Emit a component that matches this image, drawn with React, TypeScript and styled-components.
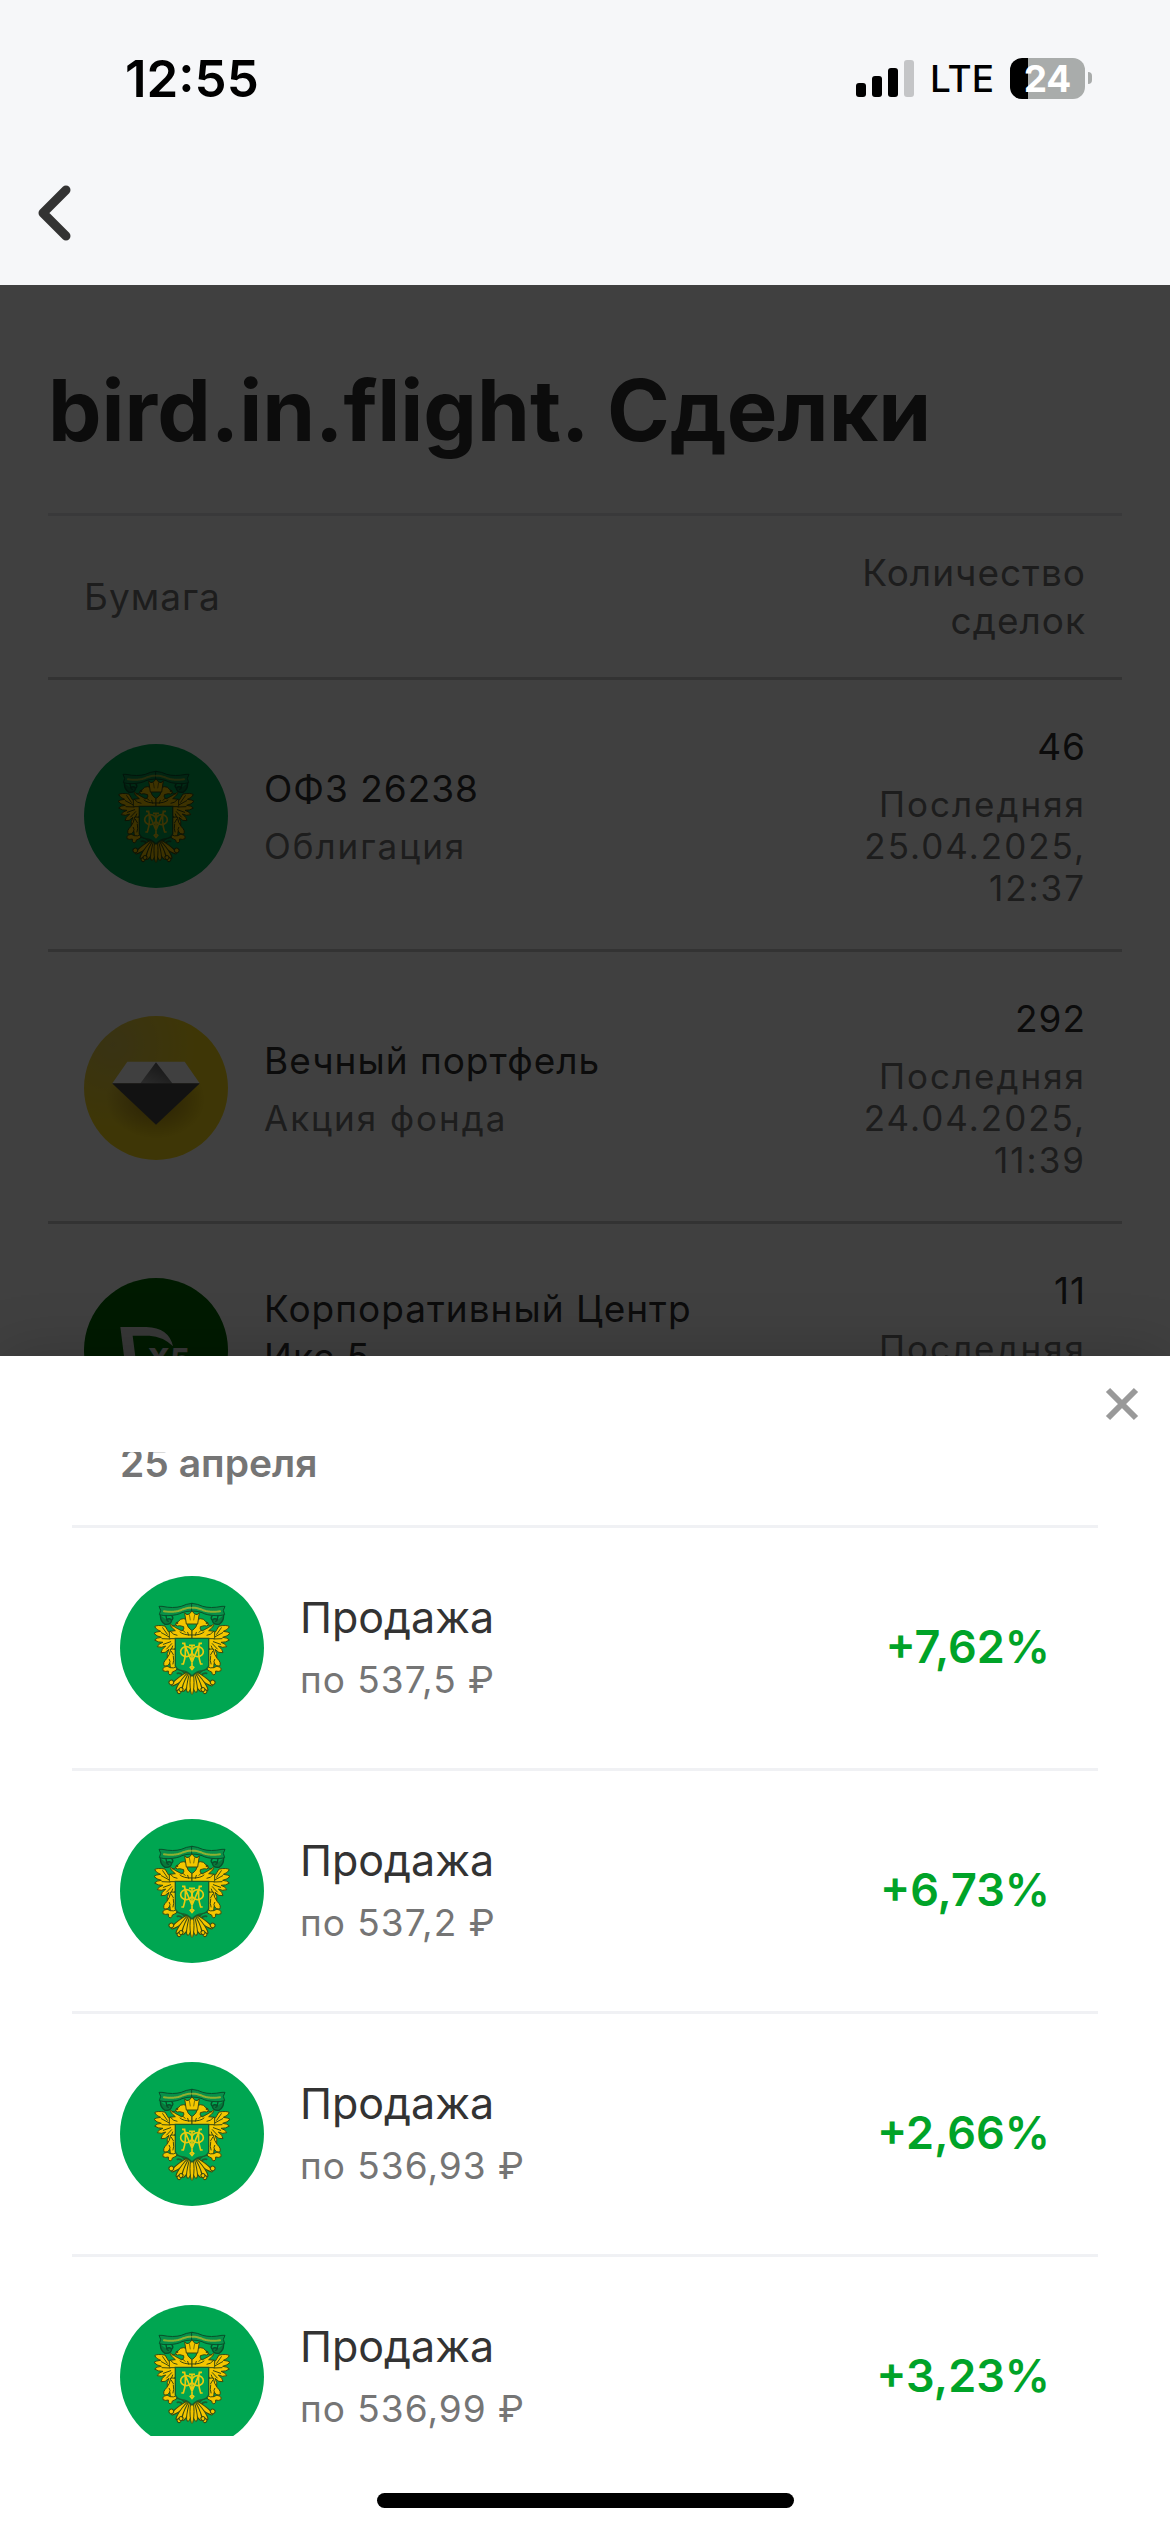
import { useLayoutEffect, useRef } from 'react';
import styled, { createGlobalStyle } from 'styled-components';

const GlobalStyle = createGlobalStyle`
  * {
    box-sizing: border-box;
  }
  body {
    margin: 0;
    background: #fff;
    color: #333;
    font-family: Inter, 'Liberation Sans', sans-serif;
  }
  h1, h2, p, ul {
    margin: 0;
    padding: 0;
  }
  button {
    display: flex;
    border: 0;
    padding: 0;
    background: none;
    cursor: pointer;
  }
`;

const Screen = styled.div`
  display: flex;
  flex-direction: column;
  height: 100vh;
  overflow: hidden;
`;

const Header = styled.header`
  flex: none;
  background: #f6f7f9;
`;

const StatusBar = styled.div`
  display: flex;
  align-items: center;
  justify-content: space-between;
  height: 156px;
  padding: 0 78px 0 125px;
  color: #000;
`;

const Clock = styled.time`
  font-size: 51px;
  font-weight: 600;
`;

const StatusIcons = styled.div`
  display: flex;
  align-items: center;
  gap: 16px;
`;

const Network = styled.span`
  font-size: 37px;
  font-weight: 500;
`;

const Battery = styled.div`
  display: flex;
  align-items: center;
  gap: 3px;
`;

const BatteryBody = styled.div<{ $level: number }>`
  display: flex;
  align-items: center;
  justify-content: center;
  width: 75px;
  height: 41px;
  border-radius: 12px;
  background: linear-gradient(to right, #000 ${({ $level }) => $level}%, #a9acab ${({ $level }) => $level}%);
  color: #fff;
  font-size: 37px;
  font-weight: 700;
`;

const BatteryTip = styled.div`
  width: 4px;
  height: 12px;
  border-radius: 0 6px 6px 0;
  background: #a9acab;
`;

const NavBar = styled.nav`
  display: flex;
  align-items: center;
  height: 129px;
  padding: 0 36px 15px;
`;

const Content = styled.main`
  position: relative;
  flex: 1;
  min-height: 0;
  overflow: hidden;
  padding: 72px 48px 0;
`;

const Backdrop = styled.div`
  position: absolute;
  inset: 0;
  background: rgba(0, 0, 0, 0.75);
`;

const Title = styled.h1`
  height: 156px;
  font-size: 85px;
  font-weight: 700;
  line-height: 108px;
`;

const Table = styled.table`
  width: 100%;
  border-collapse: collapse;
`;

const HeadCell = styled.th<{ $right?: boolean }>`
  width: ${({ $right }) => ($right ? '300px' : 'auto')};
  height: 164px;
  padding: 0 36px;
  border-top: 3px solid #e4e4e8;
  border-bottom: 3px solid #ccc;
  color: #757575;
  font-size: 37px;
  font-weight: 400;
  line-height: 48px;
  letter-spacing: 1px;
  text-align: ${({ $right }) => ($right ? 'right' : 'left')};
`;

const Cell = styled.td<{ $right?: boolean }>`
  height: 272px;
  padding: 2px 36px 0;
  border-bottom: 3px solid #ccc;
  text-align: ${({ $right }) => ($right ? 'right' : 'left')};
`;

const Paper = styled.div`
  display: flex;
  gap: 36px;
`;

const PaperText = styled.div`
  display: flex;
  flex-direction: column;
  justify-content: center;
  max-width: 480px;
  min-height: 144px;
  padding: 7px 0;
`;

const Primary = styled.p`
  font-size: 37px;
  line-height: 48px;
  letter-spacing: 1px;
`;

const Secondary = styled.p`
  margin-top: 12px;
  color: #757575;
  font-size: 35px;
  line-height: 42px;
  letter-spacing: 2px;
`;

const Sheet = styled.section`
  position: relative;
  flex: 0 1 1176px;
  display: flex;
  flex-direction: column;
  min-height: 0;
  background: #fff;
  box-shadow: 0 0 60px rgba(0, 0, 0, 0.2);
`;

const SheetTop = styled.div`
  flex: none;
  display: flex;
  justify-content: flex-end;
  height: 96px;
  padding: 30px 30px 0 0;
`;

const Trades = styled.div`
  flex: 1;
  min-height: 0;
  overflow-y: auto;
  padding: 0 72px;
  scrollbar-width: none;
`;

const Day = styled.h2`
  padding: 36px 48px 38px;
  color: #757575;
  font-size: 39px;
  font-weight: 600;
  line-height: 48px;
`;

const Trade = styled.li`
  display: flex;
  align-items: center;
  gap: 36px;
  padding: 48px;
  border-top: 3px solid #f0f1f4;
`;

const TradeText = styled.div`
  flex: 1;
  padding-bottom: 3px;
`;

const TradeKind = styled.p`
  font-size: 43px;
  line-height: 60px;
`;

const TradePrice = styled.p`
  margin-top: 6px;
  color: #757575;
  font-size: 37px;
  line-height: 54px;
  letter-spacing: 1px;
`;

const Profit = styled.p`
  padding-bottom: 3px;
  color: #00a328;
  font-size: 45px;
  font-weight: 600;
`;

const SheetBottom = styled.div`
  flex: none;
  display: flex;
  align-items: flex-end;
  justify-content: center;
  height: 96px;
  padding-bottom: 24px;
`;

const HomeIndicator = styled.div`
  width: 417px;
  height: 15px;
  border-radius: 8px;
  background: #000;
`;

const Logo = styled.svg`
  display: block;
  flex: none;
  width: 144px;
  height: 144px;
  border-radius: 50%;
`;

// one side of the two-headed eagle, mirrored for the other
function EagleHalf() {
  return (
    <g strokeLinejoin="round" strokeLinecap="round">
      <path
        d="M216 82q-18 2-32 9q-24 7-58 0l-9 0l5 12l-4 13q14 4 26 3q28-1 42-9q14-5 30-5z"
        fill="#08904a" stroke="#08502a" strokeWidth="3"
      />
      <path d="M132 106q32 4 52-4q16-7 32-7" fill="none" stroke="#8fb030" strokeWidth="6" strokeDasharray="5 3" />
      <path d="M121 118q0 20 14 27q17 2 20-11q-3-8-12-5q-5 5 2 7M138 119l2 12M156 120q6 8-2 14" fill="#08793c" stroke="#08502a" strokeWidth="4" />
      <g fill="#f4c600" stroke="#3a4a10" strokeWidth="3">
        <path d="M134 150q-24-4-30 2q5 10 18 14q-14 1-20 6q7 9 22 12q-15 1-20 8q10 8 25 7q-16 5-17 13q12 5 25-2q-13 10-14 20q13 3 24-10q-8 14-5 24q14-3 20-22l8-14l5-30q-9-10-28-10z" />
        <path d="M128 155l14 20M124 170l22 12M126 188l24 1M130 205l22-8M140 219l15-16M150 230l8-20" fill="none" />
        <path d="M166 188h-18v-22l18-2l-8-7q-10-10-6-12q14 10 34 20q8-6 5-13l-12-3q-8 3-12-2q-2-8 8-10q5-10 16-9q14 1 18 12l-8 4q2 10 9 15q4 4 6 4v25z" />
        <path d="M156 150q8 0 12-4M180 168q10 10 36 9M151 166q10 12 20 12M188 162l7 7M203 169l3 9" fill="none" />
        <circle cx="171" cy="141" r="2" fill="#3a4a10" />
        <path d="M152 220q-2 16-12 28q-13 12-7 22q9 3 17-8q-1 18 10 19q15-4 13-22l-4-38z" />
        <path d="M148 250q5 7 0 14M160 240q3 14-1 24M154 226l6 10" fill="none" />
        <path d="M169 272q-8 6-18 3q-11-8-17-2q-8 3-5 11q8 4 16 1q-2 8 5 12q8-2 7-9q14-3 20-15z" />
      </g>
      <path d="M170 280q12-2 20 8q8 6 24 4M172 292q10-2 16 6" fill="none" stroke="#17602c" strokeWidth="5" />
      <g fill="#f4c600" stroke="#3a4a10" strokeWidth="3">
        <g transform="rotate(54 216 284)">
          <ellipse cx="216" cy="324" rx="7" ry="36" />
          <circle cx="208" cy="355" r="7" />
        </g>
        <g transform="rotate(38 216 284)">
          <ellipse cx="216" cy="322" rx="8" ry="38" />
          <circle cx="224" cy="357" r="6" />
        </g>
        <g transform="rotate(24 216 284)">
          <ellipse cx="216" cy="318" rx="8" ry="34" />
          <circle cx="209" cy="349" r="6" />
        </g>
        <ellipse cx="216" cy="318" rx="7" ry="32" transform="rotate(11 216 284)" />
      </g>
    </g>
  );
}

function MinfinLogo() {
  return (
    <Logo viewBox="0 0 432 432" aria-hidden="true">
      <rect width="432" height="432" fill="#00a651" />
      <EagleHalf />
      <g transform="translate(432 0) scale(-1 1)">
        <EagleHalf />
      </g>
      <path d="M194 111l7 5l7-2l8-9l8 9l7 2l7-5l-5 33h-34z" fill="#f4c600" stroke="#3a4a10" strokeWidth="3" />
      <path d="M208 115l3 18M224 115l-3 18" stroke="#3a4a10" strokeWidth="2" />
      <ellipse cx="216" cy="320" rx="6" ry="35" fill="#f4c600" stroke="#3a4a10" strokeWidth="3" />
      <path d="M166 187h100v82q-4 12-20 15q-16 1-30 16q-14-15-30-16q-16-3-20-15z" fill="#00a651" stroke="#17602c" strokeWidth="4" />
      <g fill="none" stroke="#e8cc10" strokeWidth="5">
        <path d="M186 202h8q6 32-4 62h-6M246 202h-8q-6 32 4 62h6M193 204l23 54l23-54M207 208h18M216 208v62l-5 4l5 6l5-6l-5-4" />
        <ellipse cx="199" cy="227" rx="17" ry="15" />
        <ellipse cx="233" cy="227" rx="17" ry="15" />
      </g>
    </Logo>
  );
}

function DiamondLogo() {
  return (
    <Logo viewBox="0 0 432 432" aria-hidden="true">
      <defs>
        <radialGradient id="gold" cx="0.2" cy="0.2" r="0.6">
          <stop offset="0" stopColor="#e0c850" />
          <stop offset="1" stopColor="#f8d818" />
        </radialGradient>
        <radialGradient id="shade">
          <stop offset="0" stopColor="#7c5c10" stopOpacity="0.7" />
          <stop offset="1" stopColor="#7c5c10" stopOpacity="0" />
        </radialGradient>
        <linearGradient id="facet" x1="0" y1="1" x2="0.8" y2="0">
          <stop offset="0" stopColor="#b0b0b0" />
          <stop offset="1" stopColor="#555" />
        </linearGradient>
      </defs>
      <rect width="432" height="432" fill="url(#gold)" />
      <ellipse cx="216" cy="250" rx="150" ry="120" fill="url(#shade)" />
      <path d="M130 137h172l46 66H84z" fill="#fff" />
      <path d="M216 139l50 64h-98z" fill="url(#facet)" />
      <path d="M84 202h264L216 326z" fill="#4a4a4a" />
    </Logo>
  );
}

function X5Logo() {
  return (
    <Logo viewBox="0 0 432 432" aria-hidden="true">
      <rect width="432" height="432" fill="#006800" />
      <path d="M109 147h78q68 2 80 58q-30-30-71-32h-50l16 125h-34z" fill="#ddd" />
      <text x="190" y="276" fill="#ddd" fontSize="90" fontWeight="800">X5</text>
    </Logo>
  );
}

const deals = [
  { name: 'ОФЗ 26238', kind: 'Облигация', count: 46, date: '25.04.2025', time: '12:37', logo: <MinfinLogo /> },
  { name: 'Вечный портфель', kind: 'Акция фонда', count: 292, date: '24.04.2025', time: '11:39', logo: <DiamondLogo /> },
  { name: 'Корпоративный Центр Икс 5', kind: 'Акция', count: 11, date: '24.04.2025', time: '11:35', logo: <X5Logo /> },
];

const trades = [
  { price: '537,5', profit: '+7,62%' },
  { price: '537,2', profit: '+6,73%' },
  { price: '536,93', profit: '+2,66%' },
  { price: '536,99', profit: '+3,23%' },
];

export default function App() {
  const tradesRef = useRef<HTMLDivElement>(null);

  useLayoutEffect(() => {
    if (tradesRef.current) tradesRef.current.scrollTop = 49;
  }, []);

  return (
    <Screen>
      <GlobalStyle />
      <Header>
        <StatusBar>
          <Clock>12:55</Clock>
          <StatusIcons>
            <svg width="58" height="38" viewBox="0 0 58 38" aria-hidden="true">
              <rect x="0" y="24" width="10" height="14" rx="3" />
              <rect x="16" y="17" width="10" height="21" rx="3" />
              <rect x="32" y="9" width="10" height="29" rx="3" />
              <rect x="48" y="1" width="10" height="37" rx="3" fill="#c4c5c7" />
            </svg>
            <Network>LTE</Network>
            <Battery>
              <BatteryBody $level={24}>24</BatteryBody>
              <BatteryTip />
            </Battery>
          </StatusIcons>
        </StatusBar>
        <NavBar>
          <button type="button" aria-label="Назад">
            <svg width="36" height="56" viewBox="0 0 36 56" fill="none" stroke="#333" strokeWidth="9" strokeLinecap="round" strokeLinejoin="round">
              <path d="M30 5L7 28l23 23" />
            </svg>
          </button>
        </NavBar>
      </Header>

      <Content>
        <Title>bird.in.flight. Сделки</Title>
        <Table>
          <thead>
            <tr>
              <HeadCell scope="col">Бумага</HeadCell>
              <HeadCell scope="col" $right>Количество сделок</HeadCell>
            </tr>
          </thead>
          <tbody>
            {deals.map((deal) => (
              <tr key={deal.name}>
                <Cell>
                  <Paper>
                    {deal.logo}
                    <PaperText>
                      <Primary>{deal.name}</Primary>
                      <Secondary>{deal.kind}</Secondary>
                    </PaperText>
                  </Paper>
                </Cell>
                <Cell $right>
                  <Primary>{deal.count}</Primary>
                  <Secondary>Последняя {deal.date}, {deal.time}</Secondary>
                </Cell>
              </tr>
            ))}
          </tbody>
        </Table>
        <Backdrop />
      </Content>

      <Sheet>
        <SheetTop>
          <button type="button" aria-label="Закрыть">
            <svg width="36" height="36" viewBox="0 0 36 36" fill="none" stroke="#999" strokeWidth="6">
              <path d="M4 4l28 28M32 4L4 32" />
            </svg>
          </button>
        </SheetTop>
        <Trades ref={tradesRef}>
          <Day>25 апреля</Day>
          <ul>
            {trades.map((trade) => (
              <Trade key={trade.price}>
                <MinfinLogo />
                <TradeText>
                  <TradeKind>Продажа</TradeKind>
                  <TradePrice>по {trade.price} ₽</TradePrice>
                </TradeText>
                <Profit>{trade.profit}</Profit>
              </Trade>
            ))}
          </ul>
        </Trades>
        <SheetBottom>
          <HomeIndicator />
        </SheetBottom>
      </Sheet>
    </Screen>
  );
}
